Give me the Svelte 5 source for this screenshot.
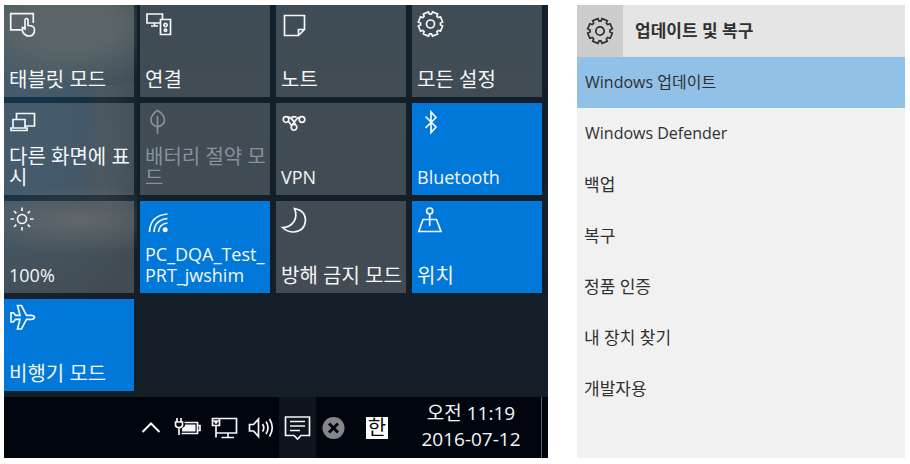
<script>
  // Outline of an eight-toothed cog with a notch at the top.
  function cog(cx, cy, outer, inner) {
    const points = [];
    for (let i = 0; i < 8; i++) {
      const mid = (i + 0.5) * 45;
      for (const [offset, radius] of [[-17, inner], [-13, outer], [13, outer], [17, inner]]) {
        const a = ((mid + offset) * Math.PI) / 180;
        points.push(`${(cx + radius * Math.sin(a)).toFixed(2)} ${(cy - radius * Math.cos(a)).toFixed(2)}`);
      }
    }
    return `M${points.join('L')}Z`;
  }

  const circle = (x, y, r) => `M${x - r} ${y}a${r} ${r} 0 1 0 ${2 * r} 0a${r} ${r} 0 1 0 ${-2 * r} 0Z`;

  const tiles = [
    { label: '태블릿 모드', icon: 'M17.5 24.8H6.7V8.7H29.3V18M21 25V15Q21 13.5 22.5 13.5T24 15V20.5Q30.5 20.5 30.5 24.5Q30.5 31 25 31Q21 31 18.5 26.5L18.5 22.5L21 23.5' },
    { label: '연결', icon: `M20 18H7V9H22.5V14M14.5 18V21M11 21H18M20.5 14.5H30.5V29.5H20.5Z${circle(25.5, 20, 1.6)}${circle(25.5, 25.3, 1.2)}` },
    { label: '노트', icon: 'M8.5 10.5H28.5V24.5L22.5 30.5H8.5ZM22.5 30.5V24.5H28.5' },
    { label: '모든 설정', icon: cog(18.5, 19, 12.3, 10) + circle(18.5, 19, 4) },
    { label: '다른 화면에 표시', icon: 'M12.5 16V10.5H30.5V23H21.5M9 24.5V16.5H21V24.5M7 25H23V27.5H7Z' },
    { label: '배터리 절약 모드', disabled: true, icon: 'M17.5 31V13M17.5 24Q11 22 11 17Q11 11.5 17.5 7.5Q24.5 11.5 24.5 17Q24.5 22 17.5 24Z' },
    { label: 'VPN', latin: true, icon: `${circle(10, 16.5, 2.8)}${circle(26, 16.5, 2.8)}${circle(18, 24.3, 2.8)}M12 14.2Q15 14.2 17 17.5L19.5 21.5M24 14.2Q21.5 14.5 19.5 17.5L16 22M12.5 18.5L15.5 22.5M15.5 13.8H20.5` },
    { label: 'Bluetooth', latin: true, active: true, icon: 'M13.5 13.5L24 24L19 29.5V9L24 14.5L13.5 25' },
    { label: '100%', latin: true, icon: `${circle(18, 18, 4.5)}M18 6.5V10M18 26V29.5M6.5 18H10M26 18H29.5M10 10L12.3 12.3M23.7 23.7L26 26M26 10L23.7 12.3M12.3 23.7L10 26` },
    { label: 'PC_DQA_Test_ PRT_jwshim', latin: true, active: true, icon: 'M9.5 31Q10 14.5 27.5 13M14 31Q14.5 19 27.5 17.5M18.5 31Q19 23 27.5 22', dot: [25.2, 28.7] },
    { label: '방해 금지 모드', icon: 'M18.5 7.5Q29.5 9.5 29.5 19.5Q28.5 30.5 17.5 31Q11 31 6.5 26.5Q14 26.5 18 20.5Q21.5 14.5 18.5 7.5Z' },
    { label: '위치', active: true, icon: `${circle(17.7, 10, 3)}M17.7 13V25M11 18.5H24.5L29 30.5H6.8Z` },
    { label: '비행기 모드', active: true, icon: 'M30.5 18.3Q30 16.3 27.5 16.3H22.5L17.5 6.5H13.5L16 16.3H11.5L9.5 13.8H7V22.8H9.5L11.5 20.3H16L13.5 30H17.5L22.5 20.3H27.5Q30 20.3 30.5 18.3Z' }
  ];

  const tray = [
    { name: '숨겨진 아이콘 표시', icon: 'M8.5 19L17 10.5L25.5 19', weight: 2 },
    { name: '배터리', icon: 'M13.5 9.5H26.5V20.5H10.5M26.5 12.5H29V17.5H26.5M6 5V9M10 5V9M4.5 9H11.5V12Q11.5 14.5 8 14.5Q4.5 14.5 4.5 12ZM8 14.5V22', fill: 'M14 11.5H24.5V18.5H11V15.5L14 13Z' },
    { name: '네트워크', icon: 'M11.5 5.5H28.5V20H8M20 20V24M13.5 24.5H26M4.5 5.5H11.5V12.5H4.5ZM8 12.5V24.5M6.5 8H9.5L8 10Z' },
    { name: '볼륨', icon: 'M4.5 11.5H8.5L13.5 6V23.5L8.5 18H4.5ZM17.5 11Q20 14.7 17.5 18.5M21 8.5Q25 14.7 21 21M24.5 6Q30 14.7 24.5 23.5' },
    { name: '알림 센터', selected: true, icon: 'M3.5 4H27.5V22.5H19L15.5 26L12 22.5H3.5ZM8 8.5H23M8 13H23M8 17.5H18' }
  ];

  const settings = [
    { text: 'Windows 업데이트', latin: true, current: true },
    { text: 'Windows Defender', latin: true },
    { text: '백업' },
    { text: '복구' },
    { text: '정품 인증' },
    { text: '내 장치 찾기' },
    { text: '개발자용' }
  ];
</script>

<main>
  <section class="desktop" aria-label="알림 센터">
    <div class="tiles">
      {#each tiles as tile}
        <button class="tile" class:active={tile.active} disabled={tile.disabled}>
          <svg viewBox="4 4 28 32" aria-hidden="true">
            <path d={tile.icon} />
            {#if tile.dot}<circle class="solid" cx={tile.dot[0]} cy={tile.dot[1]} r="2.5" />{/if}
          </svg>
          <span class="label" class:latin={tile.latin}>{tile.label}</span>
        </button>
      {/each}
    </div>

    <footer class="taskbar">
      {#each tray as item}
        <button class="tray" class:selected={item.selected} aria-label={item.name}>
          <svg viewBox="0 0 31 30" aria-hidden="true">
            <path d={item.icon} stroke-width={item.weight} />
            {#if item.fill}<path class="solid" d={item.fill} />{/if}
          </svg>
        </button>
      {/each}
      <button class="tray" aria-label="오류">
        <svg viewBox="0 0 31 30" aria-hidden="true">
          <circle class="badge" cx="14.5" cy="15" r="11" />
          <path class="cross" d="M10 10.5L19 19.5M19 10.5L10 19.5" />
        </svg>
      </button>
      <button class="ime"><span>한</span></button>
      <button class="clock"><span>오전 11:19</span><span>2016-07-12</span></button>
      <button class="peek" aria-label="바탕 화면 보기"></button>
    </footer>
  </section>

  <section class="settings">
    <header>
      <div class="cog">
        <svg viewBox="0 0 28 28" aria-hidden="true">
          <path d={cog(14, 14, 12.5, 10) + circle(14, 14, 4.2)} />
        </svg>
      </div>
      <h1>업데이트 및 복구</h1>
    </header>
    <nav>
      {#each settings as item}
        <a href="#settings" class:current={item.current} class:mixed={item.latin}>{item.text}</a>
      {/each}
    </nav>
  </section>
</main>

<style>
  :global(body) {
    margin: 0;
    background: #fff;
  }

  main {
    display: grid;
    grid-template-columns: 544fr 328fr;
    gap: 29px;
    padding: 5px 5px 6px 4px;
    font-family: 'Open Sans', 'Noto Sans CJK KR', sans-serif;
  }

  button {
    margin: 0;
    border: 0;
    padding: 0;
    background: none;
    color: #f4f6f7;
    font: inherit;
  }

  svg {
    display: block;
    flex: none;
    fill: none;
    stroke: currentColor;
    stroke-width: 1.7;
  }

  .solid {
    fill: currentColor;
    stroke: none;
  }

  .desktop {
    display: flex;
    flex-direction: column;
    background:
      radial-gradient(ellipse 120px 65px at 65px 20px, #313f42 40%, transparent 95%) 0 0 / 133px 100% no-repeat,
      radial-gradient(ellipse 110px 35px at 75px 215px, #3b4243, transparent) 0 0 / 133px 100% no-repeat,
      linear-gradient(90deg, #15304780 60%, #2c353b80 75%, transparent) 0 80px / 133px 120px no-repeat,
      radial-gradient(ellipse 150px 190px at 10px 130px, #1a3649 20%, transparent) 0 0 / 133px 100% no-repeat,
      linear-gradient(#11202b, #151e27);
  }

  .tiles {
    display: grid;
    grid-template-columns: repeat(4, 1fr);
    grid-auto-rows: minmax(92px, auto);
    gap: 6px;
    padding: 0 6px 6px 0;
  }

  .tile {
    display: flex;
    flex-direction: column;
    align-items: flex-start;
    justify-content: space-between;
    min-width: 0;
    padding: 4px 0 7px 4px;
    background: rgb(255 255 255 / 20%);
    text-align: left;
  }

  .tile svg {
    width: 28px;
    height: 32px;
  }

  .tile.active {
    background: #0078d9;
  }

  .tile:disabled {
    color: #87919a;
  }

  .label {
    padding-left: 1px;
    font-size: 20px;
    line-height: 21px;
  }

  .latin {
    font-size: 18px;
  }

  .taskbar {
    display: flex;
    justify-content: flex-end;
    height: 61px;
    background: #01060e;
  }

  .tray {
    display: flex;
    align-items: center;
    justify-content: center;
    width: 37px;
  }

  .tray svg {
    width: 31px;
    height: 30px;
  }

  .selected {
    background: #0d141b;
  }

  .badge {
    fill: #85888b;
    stroke: none;
  }

  .cross {
    stroke: #05090f;
    stroke-width: 3;
  }

  .ime {
    display: flex;
    align-items: center;
    justify-content: center;
    width: 48px;
  }

  .ime span {
    width: 22px;
    background: #fff;
    color: #05090f;
    font-size: 20px;
    line-height: 22px;
  }

  .clock {
    display: flex;
    flex-direction: column;
    justify-content: center;
    width: 140px;
    padding-bottom: 4px;
    font-size: 19px;
    line-height: 26px;
  }

  .peek {
    width: 7px;
    border-left: 1px solid #596066;
  }

  .settings {
    background: #f1f1f1;
    color: #303030;
  }

  header {
    display: flex;
    height: 52px;
    background: #e5e5e5;
  }

  .cog {
    display: flex;
    align-items: center;
    justify-content: center;
    width: 46px;
    background: #cdcdcd;
  }

  .cog svg {
    width: 28px;
    height: 28px;
  }

  h1 {
    margin: 0;
    padding-left: 12px;
    font-size: 17px;
    font-weight: 700;
    line-height: 52px;
  }

  nav a {
    display: block;
    padding-left: 7px;
    color: inherit;
    font-size: 17px;
    line-height: 51px;
    text-decoration: none;
  }

  nav a.mixed {
    padding-left: 8px;
    font-size: 16px;
  }

  nav a.current {
    background: #91c1e7;
  }
</style>
